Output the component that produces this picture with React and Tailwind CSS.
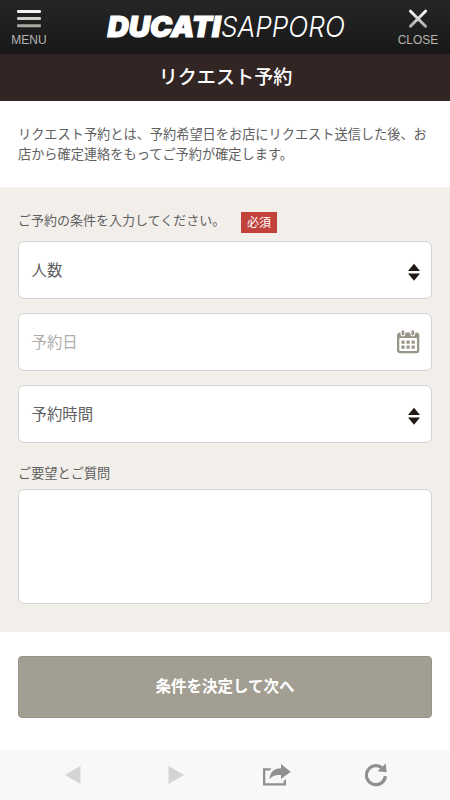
import React from "react";

function Logo() {
  return (
    <svg width="242" height="36" viewBox="0 0 242 36" className="block overflow-visible" role="img" aria-label="DUCATI SAPPORO">
      <g fill="#fff" className="font-['Inter','Liberation_Sans',sans-serif] italic">
        <text x="1.5" y="26" fontSize="28.5" fontWeight="900" stroke="#fff" strokeWidth="1.2" textLength="113" lengthAdjust="spacingAndGlyphs">DUCATI</text>
        <text x="115" y="26" fontSize="28.5" fontWeight="300" textLength="124" lengthAdjust="spacingAndGlyphs">SAPPORO</text>
      </g>
    </svg>
  );
}

function Header() {
  return (
    <header className="flex h-[54px] justify-between bg-gradient-to-b from-[#262626] to-[#181818] text-[#b4b4b2]">
      <button className="flex w-[58px] flex-col items-center pt-2">
        <svg width="26" height="20" viewBox="0 0 26 20" className="block">
          <rect x="1" y="2" width="24" height="3" rx="1.2" fill="#f2f2f0" />
          <rect x="1" y="9" width="24" height="3" rx="1.2" fill="#d0d0cb" />
          <rect x="1" y="16.3" width="24" height="3" rx="1.2" fill="#aaa9a3" />
        </svg>
        <span className="mt-[5px] text-[12px] leading-[14px]">MENU</span>
      </button>
      <div className="ml-[9px] pt-[11px]">
        <Logo />
      </div>
      <button className="flex w-[64px] flex-col items-center pt-2">
        <svg width="20" height="20" viewBox="0 0 20 20" className="block">
          <defs>
            <linearGradient id="closeShade" gradientUnits="userSpaceOnUse" x1="0" y1="2" x2="0" y2="20">
              <stop offset="0" stopColor="#fff" />
              <stop offset="1" stopColor="#a5a5a0" />
            </linearGradient>
          </defs>
          <path d="M2.5 3.2 17.5 18.2M17.5 3.2 2.5 18.2" stroke="url(#closeShade)" strokeWidth="3" strokeLinecap="round" />
        </svg>
        <span className="mt-[5px] text-[12px] leading-[14px]">CLOSE</span>
      </button>
    </header>
  );
}

function SortArrows() {
  return (
    <svg width="12" height="18" viewBox="0 0 12 18" className="mt-[3px] mr-[3px] block" fill="#231815">
      <path d="M6 .8 12 8H0ZM6 17.7 12 10.5H0Z" />
    </svg>
  );
}

function CalendarIcon() {
  return (
    <svg width="24" height="24" viewBox="0 0 24 24" className="mr-[3px] block">
      <path d="M4 2.5H20.3Q23.3 2.5 23.3 5.5V20.3Q23.3 23.3 20.3 23.3H4Q1 23.3 1 20.3V5.5Q1 2.5 4 2.5Z" fill="#999689" />
      <rect x="3.3" y="8" width="17.7" height="13" rx="0.8" fill="#fff" />
      <g fill="#999689" stroke="#fff" strokeWidth="1.1">
        <rect x="5" y="-0.3" width="3.8" height="6.3" rx="1.9" />
        <rect x="14.9" y="-0.3" width="3.8" height="6.3" rx="1.9" />
      </g>
      <path fill="#999689" d="M5.4 10.5h3.2v3.2h-3.2zM10.5 10.5h3.2v3.2h-3.2zM15.6 10.5h3.2v3.2h-3.2zM5.4 15.5h3.2v3.2h-3.2zM10.5 15.5h3.2v3.2h-3.2zM15.6 15.5h3.2v3.2h-3.2z" />
    </svg>
  );
}

function Field({ label, muted, children }) {
  return (
    <div className={`flex h-[58px] items-center justify-between rounded-md border border-[#d3d3d1] bg-white pr-2 pl-[12.5px] text-[15.4px] ${muted ? "text-[#adadab]" : "text-[#606060]"}`}>
      <span className="pt-0.5">{label}</span>
      {children}
    </div>
  );
}

function Toolbar() {
  return (
    <nav className="mt-8 flex h-[50px] bg-[#f8f8f8]">
      <button className="flex w-[146px] items-center justify-center">
        <svg width="16" height="18" viewBox="0 0 16 18" fill="#d4d4d4"><path d="M0 9 15.5 0V18Z" /></svg>
      </button>
      <button className="flex w-[60px] items-center justify-center">
        <svg width="16" height="18" viewBox="0 0 16 18" fill="#d4d4d4"><path d="M16 9 .5 0V18Z" /></svg>
      </button>
      <button className="flex w-[142px] items-center justify-center">
        <svg width="28" height="22" viewBox="0 0 28 22" fill="#909090">
          <path d="M8.5 4.2H0V21.5H23V15L20.7 17V19.3H2.3V6.4H6.8Z" />
          <path d="M6.5 15.3C7 8.2 10.5 4.5 18 4.2V0L27.7 7.7 18 15V11C12.5 10.6 9.2 11.8 6.5 15.3Z" />
        </svg>
      </button>
      <button className="flex w-[56px] items-center justify-center">
        <svg width="23" height="24" viewBox="0 0 23 24">
          <path d="M17.5 5.3A9.5 9.5 0 1 0 20.4 13" fill="none" stroke="#909090" strokeWidth="3.2" />
          <path d="M20.7.5 21.7 9.2 12.5 8.2Z" fill="#909090" />
        </svg>
      </button>
    </nav>
  );
}

export default function App() {
  return (
    <div className="h-[800px] w-[450px] overflow-hidden bg-white font-['Liberation_Sans','Noto_Sans_CJK_JP',sans-serif] text-[#606060]">
      <Header />
      <h1 className="flex h-[47px] items-center justify-center border-t border-[#2a2120] bg-[#332524] pl-px text-[19.1px] font-medium text-white">リクエスト予約</h1>
      <p className="h-[86px] px-[18px] pt-6 text-[13.2px] leading-[20px] whitespace-nowrap">
        リクエスト予約とは、予約希望日をお店にリクエスト送信した後、お
        <br />
        店から確定連絡をもってご予約が確定します。
      </p>
      <section className="h-[445px] bg-[#f2efea] px-[18px] pt-6">
        <div className="mb-2 flex h-[22px] items-center">
          <span className="w-[211px] pb-0.5 text-[13px] whitespace-nowrap">ご予約の条件を入力してください。</span>
          <span className="ml-3 flex h-[21px] w-9 items-center justify-center bg-[#c1433c] pt-px text-[12px] text-white">必須</span>
        </div>
        <div className="flex flex-col gap-[14px]">
          <Field label="人数"><SortArrows /></Field>
          <Field label="予約日" muted><CalendarIcon /></Field>
          <Field label="予約時間"><SortArrows /></Field>
        </div>
        <label htmlFor="request" className="mt-[21px] mb-[5px] block text-[13.2px] leading-5">ご要望とご質問</label>
        <textarea id="request" className="block h-[115px] w-full resize-none rounded-md border border-[#d3d3d1] bg-white" />
      </section>
      <div className="px-[18px] pt-6">
        <button className="flex h-[62px] w-full items-center justify-center rounded-[4px] border border-[#989487] bg-[#a29e92] text-[15.5px] font-bold text-white">条件を決定して次へ</button>
      </div>
      <Toolbar />
    </div>
  );
}
